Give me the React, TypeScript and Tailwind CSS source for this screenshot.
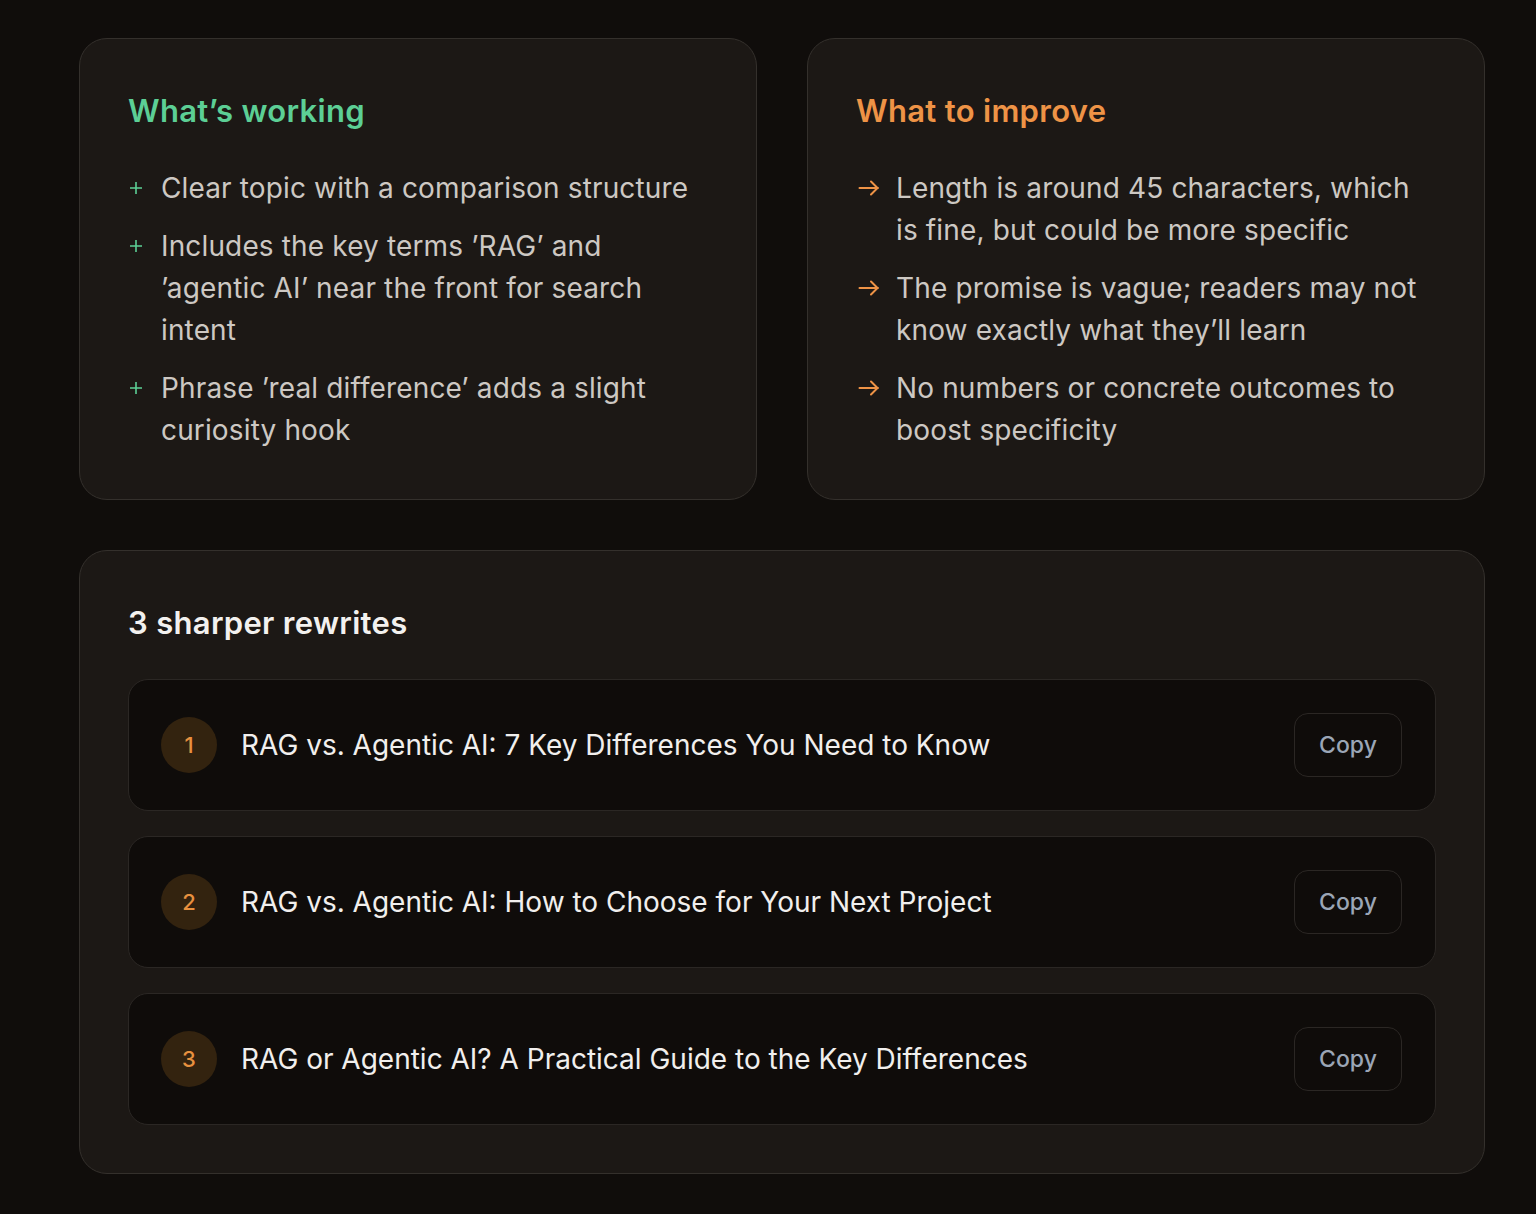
const working = [
  'Clear topic with a comparison structure',
  'Includes the key terms \u2019RAG\u2019 and \u2019agentic AI\u2019 near the front for search intent',
  'Phrase \u2019real difference\u2019 adds a slight curiosity hook',
]

const improve = [
  'Length is around 45 characters, which is fine, but could be more specific',
  'The promise is vague; readers may not know exactly what they\u2019ll learn',
  'No numbers or concrete outcomes to boost specificity',
]

const rewrites = [
  'RAG vs. Agentic AI: 7 Key Differences You Need to Know',
  'RAG vs. Agentic AI: How to Choose for Your Next Project',
  'RAG or Agentic AI? A Practical Guide to the Key Differences',
]

const PlusIcon = () => (
  <svg width="12" height="12" viewBox="0 0 12 12" fill="none" stroke="currentColor" strokeWidth="1.6">
    <path d="M6 0v12M0 6h12" />
  </svg>
)

const ArrowIcon = () => (
  <svg width="22" height="16" viewBox="0 0 22 16" fill="none" stroke="currentColor" strokeWidth="2" strokeLinecap="round" strokeLinejoin="round">
    <path d="M1.5 8h18.5M13 1.5 19.5 8 13 14.5" />
  </svg>
)

const App = () => {
  return (
    <div className="min-h-screen bg-[#100d0b] pt-[38px] pb-[38px] font-['Inter',sans-serif]">
      <div className="ml-[79px] flex w-[1406px] flex-col gap-[50px]">
        <div className="grid grid-cols-2 gap-[50px]">
          <div className="rounded-[28px] border border-[#34302c] bg-[#1c1815] p-12">
            <h2 className="mb-8 text-[31px] leading-[48px] font-semibold tracking-[0.01em] text-[#5ccf95]">What’s working</h2>
            <ul className="space-y-4">
              {working.map((item) => (
                <li key={item} className="flex text-[28px] leading-[42px] tracking-[0.005em] text-[#cdc8c3]">
                  <span className="flex h-[42px] w-[33px] shrink-0 items-center pl-[2px] text-[#5ccf95]">
                    <PlusIcon />
                  </span>
                  <span>{item}</span>
                </li>
              ))}
            </ul>
          </div>

          <div className="rounded-[28px] border border-[#34302c] bg-[#1c1815] p-12">
            <h2 className="mb-8 text-[31px] leading-[48px] font-semibold tracking-[0.01em] text-[#ee9346]">What to improve</h2>
            <ul className="space-y-4">
              {improve.map((item) => (
                <li key={item} className="flex text-[28px] leading-[42px] tracking-[0.005em] text-[#cdc8c3]">
                  <span className="flex h-[42px] w-[40px] shrink-0 items-center pl-[2px] text-[#ee9346]">
                    <ArrowIcon />
                  </span>
                  <span>{item}</span>
                </li>
              ))}
            </ul>
          </div>
        </div>

        <div className="rounded-[28px] border border-[#34302c] bg-[#1c1815] p-12">
          <h2 className="mb-8 text-[31px] leading-[48px] font-semibold tracking-[0.01em] text-[#f3f1ef]">3 sharper rewrites</h2>
          <div className="flex flex-col gap-[25px]">
            {rewrites.map((title, i) => (
              <div
                key={title}
                className="flex h-[132px] items-center justify-between rounded-[20px] border border-[#2b2724] bg-[#0f0c0a] pr-[33px] pl-[32px]"
              >
                <div className="flex items-center gap-6">
                  <div className="flex h-14 w-14 items-center justify-center rounded-full bg-[#33230f] text-[22px] font-medium text-[#e8913f]">
                    {i + 1}
                  </div>
                  <span className="text-[28px] text-[#f1efed]">{title}</span>
                </div>
                <button className="h-16 w-[108px] rounded-[14px] border border-[#2b2724] bg-[#0f0c0a] text-[23px] font-medium text-[#9ba6b6]">
                  Copy
                </button>
              </div>
            ))}
          </div>
        </div>
      </div>
    </div>
  )
}

export default App
